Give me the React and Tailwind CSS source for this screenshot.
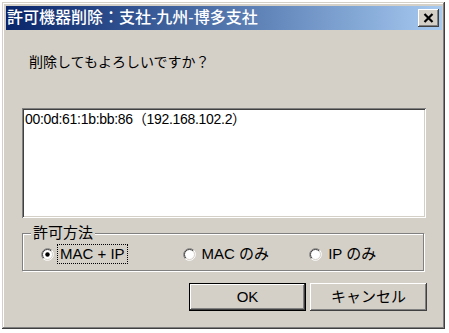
const raised =
  "shadow-[inset_-1px_-1px_#404040,inset_1px_1px_#ffffff,inset_-2px_-2px_#808080,inset_2px_2px_#d4d0c8]";

function Radio({ checked }) {
  return (
    <svg width="13" height="13" viewBox="0 0 13 13" className="shrink-0">
      <circle cx="6.5" cy="6.5" r="5.5" fill="#ffffff" />
      <path d="M2.26 10.74 A6 6 0 0 1 10.74 2.26" fill="none" stroke="#808080" strokeWidth="1" />
      <path d="M10.74 2.26 A6 6 0 0 1 2.26 10.74" fill="none" stroke="#ffffff" strokeWidth="1" />
      <path d="M2.96 10.04 A5 5 0 0 1 10.04 2.96" fill="none" stroke="#404040" strokeWidth="1" />
      <path d="M10.04 2.96 A5 5 0 0 1 2.96 10.04" fill="none" stroke="#d4d0c8" strokeWidth="1" />
      {checked ? <circle cx="6.5" cy="6.5" r="2.2" fill="#000000" /> : null}
    </svg>
  );
}

function RadioOption({ label, checked, focused, className = "" }) {
  return (
    <div className={`flex items-center ${className}`}>
      <Radio checked={checked} />
      <span
        className={`ml-[4px] px-[2px] leading-[18px] text-[15px] text-black ${
          focused ? "outline outline-1 outline-dotted outline-black" : ""
        }`}
      >
        {label}
      </span>
    </div>
  );
}

export default function App() {
  return (
    <div
      className="min-h-screen bg-white pt-[2px] pl-[2px]"
      style={{ fontFamily: '"Liberation Sans", "Noto Sans CJK JP", sans-serif' }}
    >
      <div className="flex h-[327px] w-[443px] flex-col bg-[#d4d0c8] pl-[4px] pr-[3px] pt-[4px] shadow-[inset_-1px_-1px_#404040,inset_1px_1px_#d4d0c8,inset_-2px_-2px_#808080,inset_2px_2px_#ffffff]">
        {/* title bar */}
        <div className="flex h-[24px] items-center justify-between bg-gradient-to-r from-[#0a246a] to-[#a6caf0] pl-[1px] pr-[3px]">
          <span className="text-[16px] font-medium leading-none text-white">
            許可機器削除：支社-九州-博多支社
          </span>
          <div className={`flex h-[18px] w-[21px] items-center justify-center bg-[#d4d0c8] ${raised}`}>
            <svg width="11" height="10" viewBox="0 0 11 10">
              <path d="M1.5 1 L9.5 9 M9.5 1 L1.5 9" stroke="#000" strokeWidth="2.2" />
            </svg>
          </div>
        </div>

        <div className="flex flex-col pl-[16px]">
          <p className="mt-[22px] pl-[7px] text-[14px] leading-[20px] text-black">
            削除してもよろしいですか？
          </p>

          {/* list */}
          <div className="mt-[36px] h-[110px] w-[404px] bg-white px-[3px] pt-[3px] shadow-[inset_1px_1px_#808080,inset_-1px_-1px_#ffffff,inset_2px_2px_#404040,inset_-2px_-2px_#d4d0c8]">
            <div className="text-[14px] leading-[16px] tracking-[-0.3px] text-black">
              00:0d:61:1b:bb:86（192.168.102.2）
            </div>
          </div>

          {/* group box */}
          <div className="relative mt-[15px] h-[38px] w-[402px] border border-[#808080] shadow-[inset_1px_1px_#ffffff,1px_1px_#ffffff]">
            <span className="absolute -top-[10px] left-[8px] bg-[#d4d0c8] px-[2px] text-[15px] leading-[18px] text-black">
              許可方法
            </span>
            <div className="flex h-full items-center pl-[18px] pt-[4px]">
              <RadioOption label="MAC + IP" checked focused />
              <RadioOption label="MAC のみ" className="ml-[56px]" />
              <RadioOption label="IP のみ" className="ml-[38px]" />
            </div>
          </div>

          {/* buttons */}
          <div className="mt-[12px] flex pl-[167px]">
            <div className="border border-black">
              <div className={`flex h-[26px] w-[115px] items-center justify-center bg-[#d4d0c8] text-[15px] text-black ${raised}`}>
                OK
              </div>
            </div>
            <div className={`ml-[4px] flex h-[28px] w-[117px] items-center justify-center bg-[#d4d0c8] text-[15px] text-black ${raised}`}>
              キャンセル
            </div>
          </div>
        </div>
      </div>
    </div>
  );
}
